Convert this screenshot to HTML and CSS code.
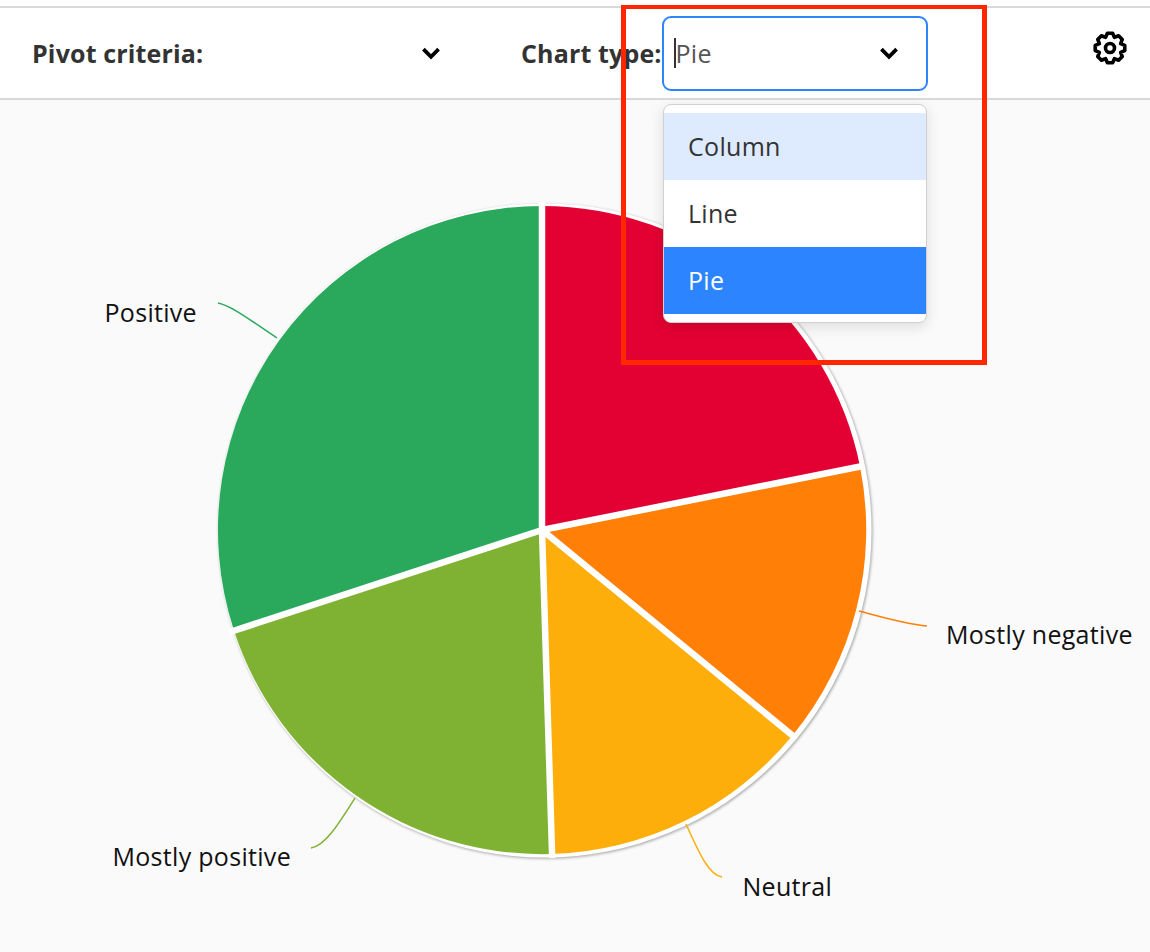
FILE: index.html
```html
<!DOCTYPE html>
<html lang="en">
<head>
    <meta charset="UTF-8">
    <meta name="viewport" content="width=device-width, initial-scale=1.0">
    <title>Pivot chart</title>
    <link rel="stylesheet" href="styles.css">
</head>
<body>
    <div class="toolbar">
        <div class="field field-pivot">
            <span class="field-label label-pivot">Pivot criteria:</span>
            <div class="select">
                <span class="select-value"></span>
                <svg class="chevron" viewBox="0 0 18 12"><polyline points="2,2 9,9 16,2"/></svg>
            </div>
        </div>
        <div class="field field-chart">
            <span class="field-label label-chart">Chart type:</span>
            <div class="select select-focus">
                <span class="select-value"><span class="caret"></span>Pie</span>
                <svg class="chevron" viewBox="0 0 18 12"><polyline points="2,2 9,9 16,2"/></svg>
                <ul class="menu">
                    <li class="menu-item menu-item-hover">Column</li>
                    <li class="menu-item">Line</li>
                    <li class="menu-item menu-item-selected">Pie</li>
                </ul>
            </div>
        </div>
        <svg class="gear" viewBox="-18 -18 36 36">
            <path d="M-2.6,-14.77 L2.6,-14.77 L4.4,-10.62 L8.6,-12.29 L12.29,-8.6 L10.62,-4.4 L14.77,-2.6 L14.77,2.6 L10.62,4.4 L12.29,8.6 L8.6,12.29 L4.4,10.62 L2.6,14.77 L-2.6,14.77 L-4.4,10.62 L-8.6,12.29 L-12.29,8.6 L-10.62,4.4 L-14.77,2.6 L-14.77,-2.6 L-10.62,-4.4 L-12.29,-8.6 L-8.6,-12.29 L-4.4,-10.62 Z"/>
            <circle cx="0" cy="0" r="4.5"/>
        </svg>
    </div>

    <div class="chart">
        <svg class="chart-svg" viewBox="0 100 1150 852">
            <circle class="pie-disc" cx="544.5" cy="530.5" r="327"/>
            <path class="slice-red" d="M542 530 L542 206 A324 324 0 0 1 860 466.5 Z"/>
            <path class="slice-orange" d="M542 530 L860 466.5 A324 324 0 0 1 792.5 735.5 Z"/>
            <path class="slice-yellow" d="M542 530 L792.5 735.5 A324 324 0 0 1 552 854 Z"/>
            <path class="slice-lime" d="M542 530 L552 854 A324 324 0 0 1 234 630.7 Z"/>
            <path class="slice-green" d="M542 530 L234 630.7 A324 324 0 0 1 542 206 Z"/>
            <path class="dividers" d="M542 530 L542 202 M542 530 L864 465.7 M542 530 L795.6 738 M542 530 L552.2 858 M542 530 L230 632"/>
            <path class="leader leader-green" d="M218 303 C232 306 250 320 277 338"/>
            <path class="leader leader-lime" d="M311 848 C325 846 338 825 355 798"/>
            <path class="leader leader-yellow" d="M686 824 C698 850 708 875 722 877"/>
            <path class="leader leader-orange" d="M859 611 C885 618 905 624 927 626"/>
            <text class="pie-label" x="104.5" y="322">Positive</text>
            <text class="pie-label" x="112.5" y="866">Mostly positive</text>
            <text class="pie-label" x="742.5" y="896">Neutral</text>
            <text class="pie-label" x="946" y="644">Mostly negative</text>
        </svg>
    </div>

    <div class="annotation"></div>
</body>
</html>
```

FILE: styles.css
```css
html, body {
    margin: 0;
    height: 952px;
    overflow: hidden;
}
body {
    font-family: "Open Sans", "Noto Sans", sans-serif;
    background-color: #fff;
    color: #333;
    position: relative;
}

.toolbar {
    display: flex;
    align-items: center;
    box-sizing: border-box;
    height: 94px;
    margin-top: 6px;
    padding-left: 32px;
    background: #fff;
    border-top: 2px solid #d9d9d9;
    border-bottom: 2px solid #d9d9d9;
}
.field {
    display: flex;
    align-items: center;
}
.field-chart {
    margin-left: 51px;
}
.field-label {
    font-size: 25px;
    font-weight: bold;
    letter-spacing: 0.15px;
    color: #333;
    white-space: nowrap;
}
.label-pivot { width: 172px; }
.label-chart { width: 141px; }

.select {
    position: relative;
    display: flex;
    align-items: center;
    justify-content: space-between;
    box-sizing: border-box;
    width: 266px;
    height: 75px;
    padding: 0 27px 0 10px;
    border: 2px solid transparent;
    border-radius: 9px;
}
.select-focus {
    border-color: #2d84fb;
}
.select-value {
    display: flex;
    align-items: center;
    font-size: 25px;
    letter-spacing: 0.3px;
    color: #555;
}
.caret {
    width: 1.5px;
    height: 30px;
    background: #333;
}
.chevron {
    width: 20px;
    height: 13px;
    fill: none;
    stroke: #000;
    stroke-width: 3.5;
}

.menu {
    position: absolute;
    top: 86px;
    left: -1px;
    z-index: 2;
    box-sizing: border-box;
    width: 264px;
    margin: 0;
    padding: 8px 0;
    list-style: none;
    background: #fff;
    border: 1px solid #d0d0d0;
    border-radius: 8px;
    box-shadow: 0 4px 14px rgba(0, 0, 0, 0.12);
}
.menu-item {
    height: 67px;
    line-height: 67px;
    padding-left: 24px;
    font-size: 25px;
    letter-spacing: 0.3px;
    color: #333;
}
.menu-item-hover { background: #deebfe; }
.menu-item-selected {
    background: #2d84ff;
    color: #fff;
}

.gear {
    width: 36px;
    height: 36px;
    margin-left: auto;
    margin-right: 22px;
    margin-top: -11px;
    fill: none;
    stroke: #000;
    stroke-width: 3.6;
    stroke-linejoin: round;
}

.chart {
    height: 852px;
    background: #fafafa;
}
.chart-svg {
    display: block;
    width: 1150px;
    height: 852px;
}
.pie-disc {
    fill: #fff;
    filter: drop-shadow(1px 1px 1.5px rgba(0, 0, 0, 0.35));
}
.slice-red { fill: #e30032; }
.slice-orange { fill: #ff7f07; }
.slice-yellow { fill: #fdae0b; }
.slice-lime { fill: #7fb233; }
.slice-green { fill: #2aa95c; }
.dividers {
    fill: none;
    stroke: #fff;
    stroke-width: 6.5;
}

.leader {
    fill: none;
    stroke-width: 1.5;
}
.leader-green { stroke: #2aa95c; }
.leader-lime { stroke: #7fb233; }
.leader-yellow { stroke: #fdae0b; }
.leader-orange { stroke: #ff7f07; }

.pie-label {
    font-size: 25px;
    letter-spacing: 0.3px;
    fill: #111;
}

.annotation {
    position: absolute;
    top: 5px;
    left: 621px;
    z-index: 3;
    box-sizing: border-box;
    width: 366px;
    height: 360px;
    border: 5px solid #ff2600;
    border-top-width: 4px;
    pointer-events: none;
}
```
